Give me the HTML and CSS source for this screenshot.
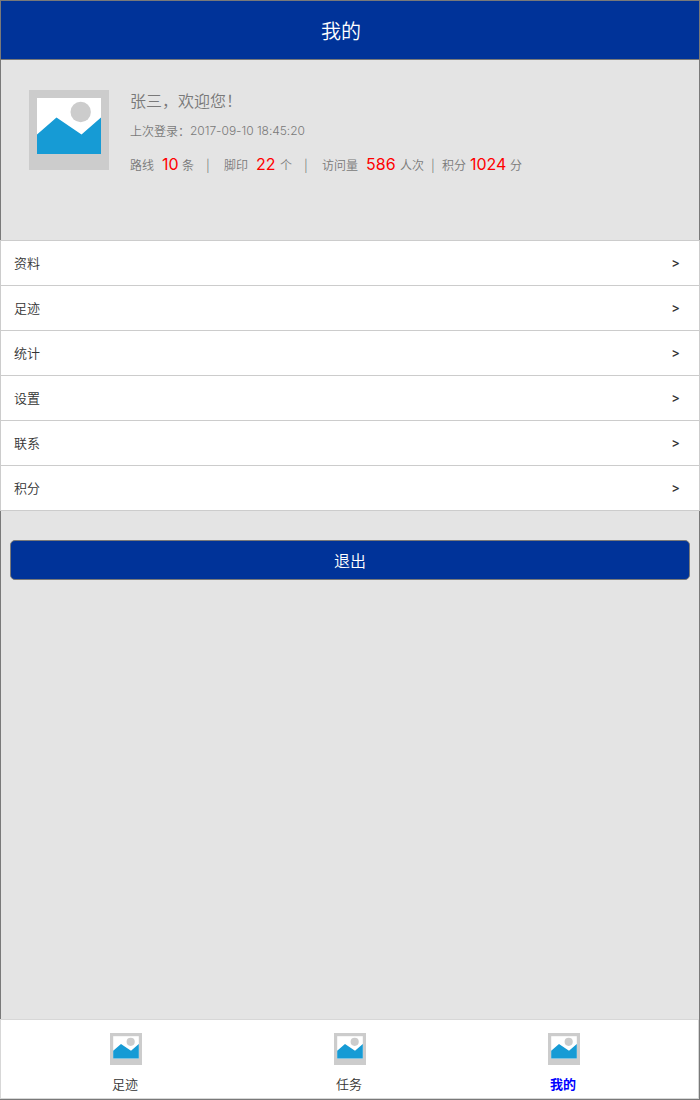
FILE: index.html
```html
<!DOCTYPE html>
<html lang="zh-CN">
<head>
<meta charset="utf-8">
<title>我的</title>
<link rel="stylesheet" href="styles.css">
</head>
<body>
<svg class="defs" width="0" height="0">
  <symbol id="picture" viewBox="0 0 80 80">
    <path fill="#ccc" d="M0 0h80v80H0z"/>
    <path fill="#fff" d="M8 8h64v56H8z"/>
    <circle cx="51.7" cy="22" r="10.2" fill="#ccc"/>
    <path fill="#169bd5" d="M8 44.5 27.5 27.5 52.5 44.5 72 27.5V64H8z"/>
  </symbol>
</svg>
<div class="page">
  <header class="header"><h1 class="title">我的</h1></header>
  <section class="profile">
    <svg class="avatar"><use href="#picture"/></svg>
    <div class="info">
      <p class="welcome">张三，欢迎您！</p>
      <p class="login"><span>上次登录：</span><span class="time">2017-09-10 18:45:20</span></p>
      <p class="stats">
        <span>路线</span><b class="num">10</b><span>条</span><span class="bar">|</span>
        <span>脚印</span><b class="num">22</b><span>个</span><span class="bar">|</span>
        <span>访问量</span><b class="num">586</b><span>人次</span><span class="bar">|</span>
        <span>积分</span><b class="num">1024</b><span>分</span>
      </p>
    </div>
  </section>
  <ul class="menu">
    <li class="item"><span>资料</span><span class="arrow">&gt;</span></li>
    <li class="item"><span>足迹</span><span class="arrow">&gt;</span></li>
    <li class="item"><span>统计</span><span class="arrow">&gt;</span></li>
    <li class="item"><span>设置</span><span class="arrow">&gt;</span></li>
    <li class="item"><span>联系</span><span class="arrow">&gt;</span></li>
    <li class="item"><span>积分</span><span class="arrow">&gt;</span></li>
  </ul>
  <button class="logout">退出</button>
  <nav class="tabs">
    <a class="tab"><svg class="tab-icon"><use href="#picture"/></svg><span class="tab-label">足迹</span></a>
    <a class="tab"><svg class="tab-icon"><use href="#picture"/></svg><span class="tab-label">任务</span></a>
    <a class="tab active"><svg class="tab-icon"><use href="#picture"/></svg><span class="tab-label">我的</span></a>
  </nav>
</div>
</body>
</html>
```
FILE: styles.css
```css
* { box-sizing: border-box; margin: 0; padding: 0; }
body { font-family: "Noto Sans CJK SC", sans-serif; font-size: 13px; font-weight: 350; color: #333; }
.defs { position: absolute; }
.page {
  display: flex;
  flex-direction: column;
  height: 1100px;
  background: linear-gradient(#797979, #797979) left / 1px 100% no-repeat,
    linear-gradient(#797979, #797979) right / 1px 100% no-repeat, #e4e4e4;
  border-bottom: 1px solid #797979;
}
.header {
  height: 60px;
  padding-right: 18px;
  border: 1px solid #797979;
  background: #039;
  text-align: center;
}
.title { font-size: 20px; font-weight: 350; line-height: 59px; color: #fff; }
.profile { display: flex; gap: 21px; height: 180px; padding: 30px 29px; color: #797979; }
.avatar { width: 80px; height: 80px; }
.info { font-size: 12px; font-weight: 350; }
.welcome { font-size: 16px; line-height: 20px; }
.login { display: flex; margin-top: 12px; line-height: 18px; }
.time { font-family: Inter, sans-serif; font-weight: 350; letter-spacing: -0.03px; }
.stats {
  display: grid;
  grid-template-columns: 32px 20px 24px 18px 32px 24px 24px 18px 44px 34px 31px 11px 28px 40px 12px;
  align-items: baseline;
  margin-top: 13px;
  line-height: 22px;
  white-space: nowrap;
}
.num { font-family: Inter, sans-serif; font-size: 16px; font-weight: 400; color: #f00; }
.bar { font-family: Inter, sans-serif; }
.menu { list-style: none; border: 1px solid #ccc; border-bottom: 0; background: #fff; }
.item {
  display: flex;
  justify-content: space-between;
  height: 45px;
  padding: 0 19px 0 13px;
  border-bottom: 1px solid #ccc;
  line-height: 44px;
}
.arrow { font-family: Inter, sans-serif; font-weight: 500; }
.logout {
  height: 40px;
  margin: 29px 10px 0;
  border: 1px solid #797979;
  border-radius: 5px;
  background: #039;
  color: #fff;
  font: 350 16px/38px "Noto Sans CJK SC", sans-serif;
}
.tabs {
  display: grid;
  grid-template-columns: 32px 32px 32px;
  column-gap: 192px;
  height: 80px;
  margin: auto 1px 0 0;
  padding: 13px 0 0 109px;
  border: 1px solid #d7d7d7;
  background: #fff;
}
.tab { display: flex; flex-direction: column; align-items: center; width: 32px; line-height: 18px; }
.tab.active { margin-left: -10px; color: #00f; font-weight: 700; }
.tab-icon { width: 32px; height: 32px; margin-bottom: 10px; }
.tab-label { padding-right: 2px; }
```
